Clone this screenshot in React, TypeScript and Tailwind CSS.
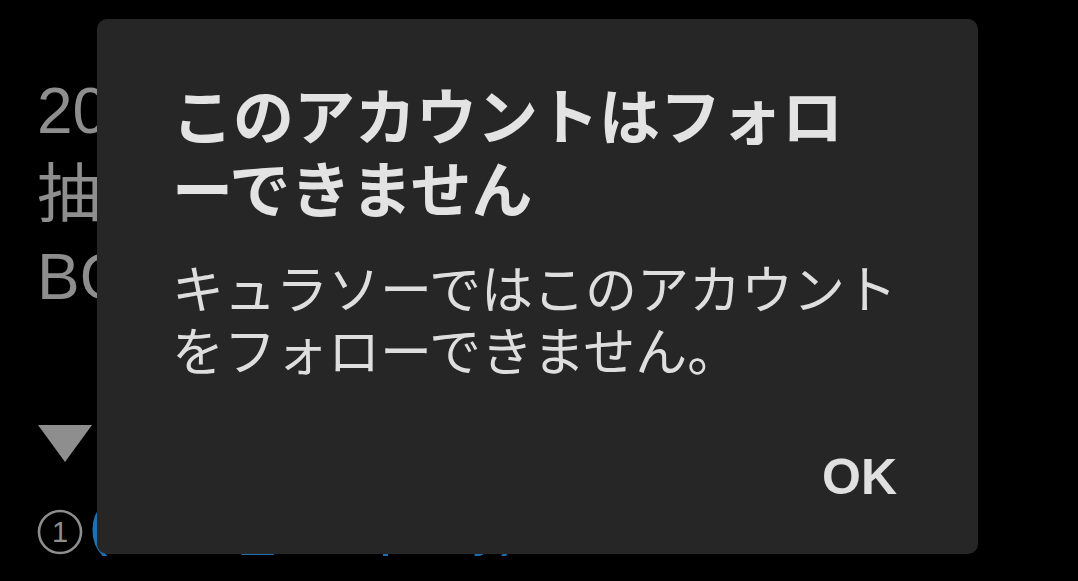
import React from "react";

export default function App() {
  const jp = { fontFamily: '"Noto Sans CJK JP", "Noto Sans", sans-serif' };
  const bg = { fontFamily: '"Liberation Sans", "Noto Sans CJK JP", sans-serif' };
  return (
    <div className="relative w-[1078px] h-[581px] bg-black overflow-hidden" style={jp}>
      <div className="pl-[37px] pt-[70px] text-[#8e8e8e] whitespace-nowrap">
        <div className="text-[64px] leading-[83px]" style={bg}>
          <div>2023年のプレゼント</div>
          <div>抽選キャンペーン</div>
          <div>BOXを開封しよう</div>
        </div>
        <svg className="mt-[106px] block" width="56" height="38" viewBox="0 0 56 38">
          <polygon points="1,0 55,0 28,37" fill="#8e8e8e" />
        </svg>
        <div className="mt-[32px] flex items-center gap-[6px]">
          <svg width="46" height="46" viewBox="0 0 46 46" className="block">
            <circle cx="23" cy="23" r="21" fill="none" stroke="#8e8e8e" strokeWidth="2.6" />
            <text x="23" y="33" textAnchor="middle" fontSize="29" fill="#8e8e8e" fontFamily="Liberation Sans, sans-serif">1</text>
          </svg>
          <span className="text-[56px] leading-[60px] pb-[14px]" style={bg}>
            <span className="text-[#1f70b0]">(@cur_company)</span>
            <span> さん</span>
          </span>
        </div>
      </div>

      <div className="absolute left-[97px] top-[19px] w-[881px] h-[535px] rounded-[10px] bg-[#262626] pl-[75px] pr-[60px] pt-[58px] flex flex-col">
        <div className="text-[61px] leading-[73px] font-semibold text-[#e3e3e3] whitespace-nowrap">
          <div>このアカウントはフォロ</div>
          <div>ーできません</div>
        </div>
        <div className="mt-[33px] text-[52px] leading-[62px] text-[#dedede] whitespace-nowrap">
          <div>キュラソーではこのアカウント</div>
          <div>をフォローできません。</div>
        </div>
        <div className="mt-auto mb-[52px] flex justify-end pr-[21px]">
          <span className="text-[50px] font-bold text-[#e0e0e0] leading-none" style={{ fontFamily: '"Liberation Sans", Arial, sans-serif' }}>OK</span>
        </div>
      </div>
    </div>
  );
}
